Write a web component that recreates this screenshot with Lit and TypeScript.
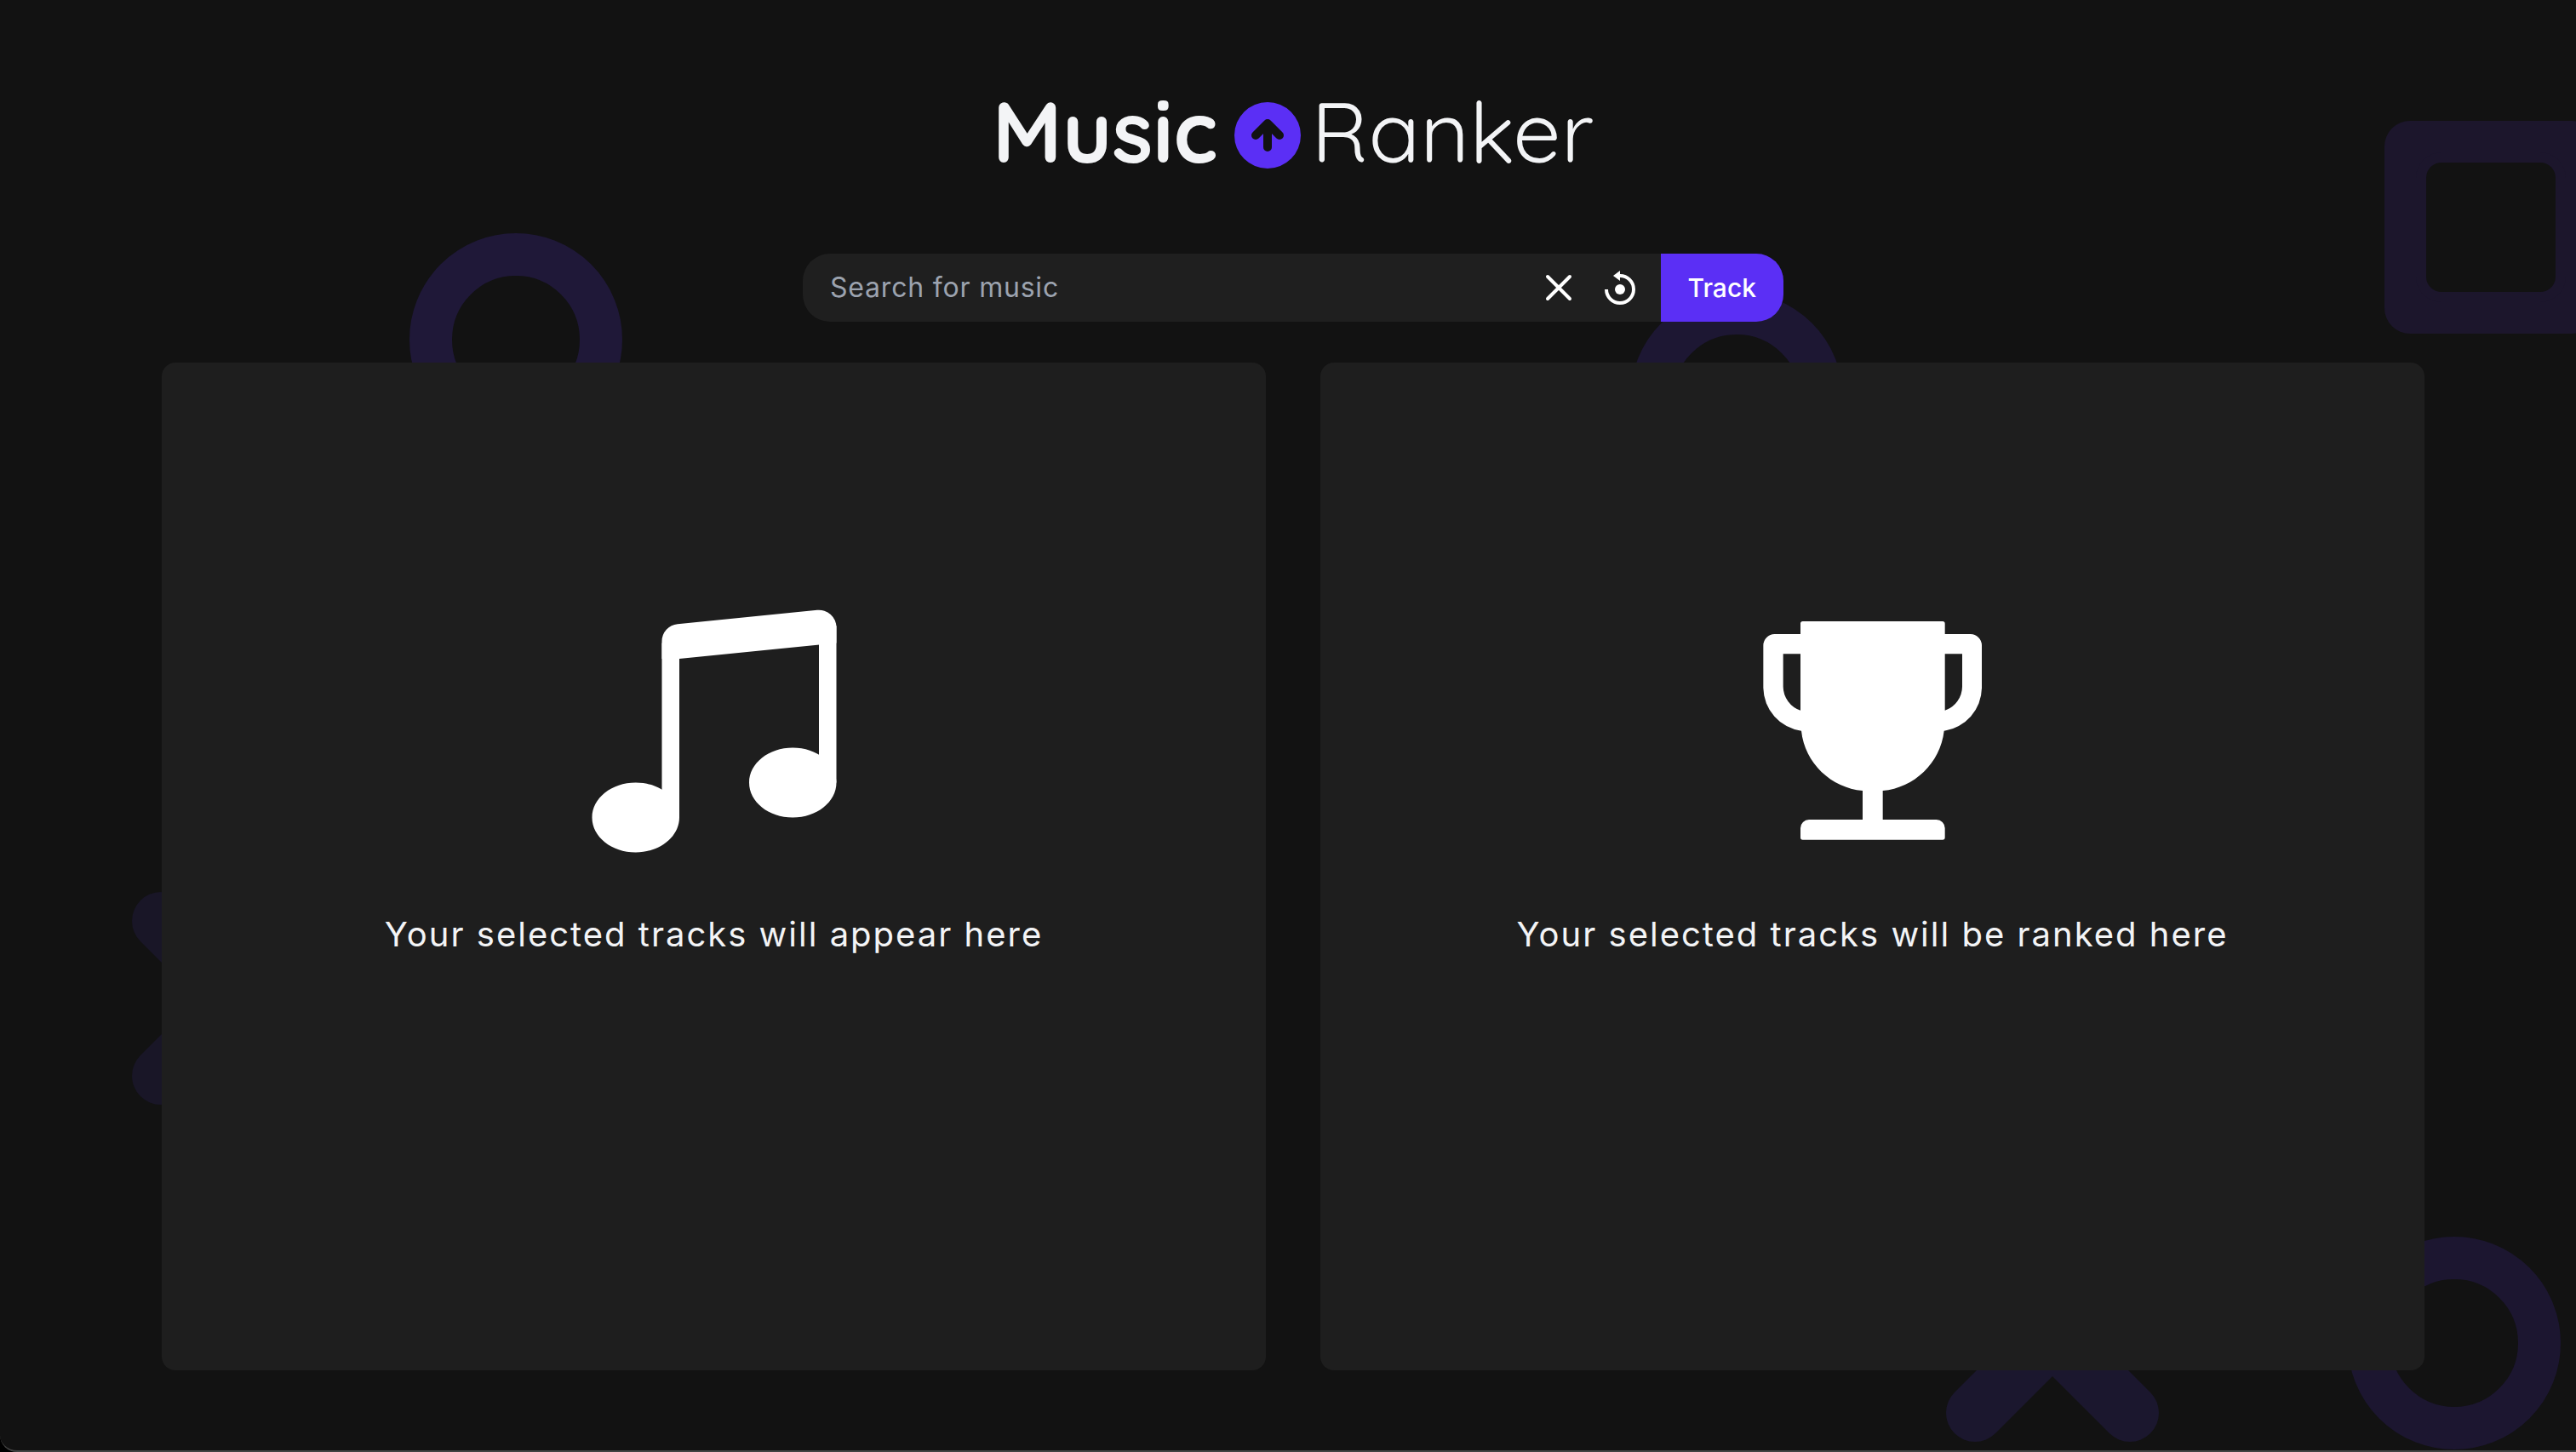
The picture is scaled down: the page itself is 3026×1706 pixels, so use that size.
import { LitElement, html, css, svg } from "lit";
import { customElement, property, state } from "lit/decorators.js";

const noteIcon = svg`
  <svg class="art" viewBox="0 0 16 16" aria-hidden="true">
    <path d="M6 13c0 1.105-1.12 2-2.5 2S1 14.105 1 13s1.12-2 2.5-2 2.5.895 2.5 2zM15 11c0 1.105-1.12 2-2.5 2s-2.5-.895-2.5-2 1.12-2 2.5-2 2.5.895 2.5 2z" />
    <path d="M14 11V2h1v9zM6 3v10H5V3z" />
    <path d="M5 2.905a1 1 0 0 1 .9-.995l8-.8a1 1 0 0 1 1.1.995V3L6 3.9H5z" />
  </svg>`;

const trophyIcon = svg`
  <svg class="art" viewBox="-12 -18 984 984" aria-hidden="true">
    <path fill-rule="evenodd" d="M225 98q0-8 8-8H726q8 0 8 8V135H824a40 40 0 0 1 40 40V325A155 155 0 0 1 731 476C718 590 625 677 515 687V789H704a30 30 0 0 1 30 30V852q0 8-8 8H233q-8 0-8-8V819a30 30 0 0 1 30-30H444V687C334 677 240 590 228 476A155 155 0 0 1 94 325V175a40 40 0 0 1 40-40H225ZM164 205V320A90 90 0 0 0 225 404V205ZM734 205V404A90 90 0 0 0 795 320V205Z" />
  </svg>`;

@customElement("ranker-logo")
export class RankerLogo extends LitElement {
  static styles = css`
    :host { display: block; }
    .title {
      margin: 0;
      display: flex;
      align-items: center;
      gap: 12px;
      color: #f3f4f6;
      font: 400 100px/124px Quicksand, Lato, sans-serif;
    }
    .bold { font-weight: 700; padding-right: 8px; }
    .mark { display: block; width: 78px; height: 88px; }
    .disc { fill: #5b2ff5; }
    .arrow { fill: none; stroke: #121212; stroke-width: 10px; stroke-linecap: round; stroke-linejoin: round; }
  `;

  render() {
    return html`
      <h1 class="title">
        <span class="bold">Music</span>
        <svg class="mark" viewBox="0 0 78 88" aria-hidden="true">
          <circle class="disc" cx="39" cy="49" r="39" />
          <path class="arrow" d="M39 36V63M25 49L39 35L53 49" />
        </svg>
        <span>Ranker</span>
      </h1>`;
  }
}

@customElement("search-bar")
export class SearchBar extends LitElement {
  @state() private query = "";

  static styles = css`
    :host { display: block; }
    .bar {
      display: flex;
      align-items: stretch;
      width: 1152px;
      max-width: 100%;
      height: 80px;
      border-radius: 32px;
      overflow: hidden;
      background: #1f1f1f;
    }
    .field {
      flex: 1;
      min-width: 0;
      border: 0;
      outline: 0;
      padding: 0 32px;
      background: transparent;
      color: #f3f4f6;
      font: 400 32px/48px Inter, sans-serif;
      letter-spacing: 0.025em;
    }
    .field::placeholder { color: #9ca3af; opacity: 1; }
    .actions { display: flex; align-items: center; gap: 24px; padding-right: 24px; }
    .icon-button { display: flex; padding: 0; border: 0; background: none; cursor: pointer; }
    .icon { display: block; width: 48px; height: 48px; fill: none; stroke: #fff; stroke-width: 4px; }
    .round { stroke-linecap: round; }
    .solid { fill: #fff; stroke: none; }
    .submit {
      border: 0;
      padding: 0 32px;
      background: #5b2ff5;
      color: #fff;
      font: 500 30px/48px Inter, sans-serif;
      cursor: pointer;
    }
  `;

  private onInput(e: Event) {
    this.query = (e.target as HTMLInputElement).value;
  }

  render() {
    return html`
      <form class="bar" role="search" @submit=${(e: Event) => e.preventDefault()}>
        <input class="field" type="text" aria-label="Search for music" placeholder="Search for music"
          .value=${this.query} @input=${this.onInput} />
        <div class="actions">
          <button class="icon-button" type="button" aria-label="Clear" @click=${() => (this.query = "")}>
            <svg class="icon" viewBox="0 0 48 48"><path class="round" d="M11 11L37 37M37 11L11 37" /></svg>
          </button>
          <button class="icon-button" type="button" aria-label="Reset">
            <svg class="icon" viewBox="0 0 48 48">
              <path d="M8 26A16 16 0 1 0 24 10" />
              <path class="solid" d="M16 10L24 4V16Z" />
              <circle class="solid" cx="24" cy="26" r="6" />
            </svg>
          </button>
        </div>
        <button class="submit" type="submit">Track</button>
      </form>`;
  }
}

@customElement("empty-panel")
export class EmptyPanel extends LitElement {
  @property() message = "";
  @property() icon: "note" | "trophy" = "note";

  static styles = css`
    :host { display: block; }
    .panel {
      box-sizing: border-box;
      height: 100%;
      padding: 268px 32px 64px;
      display: flex;
      flex-direction: column;
      align-items: center;
      gap: 48px;
      border-radius: 16px;
      background: #1e1e1e;
    }
    .art { display: block; width: 328px; height: 328px; fill: #fff; }
    .message {
      margin: 0;
      color: #f3f4f6;
      font: 400 40px/56px Inter, sans-serif;
      letter-spacing: 0.05em;
      text-align: center;
    }
  `;

  render() {
    return html`
      <section class="panel">
        ${this.icon === "note" ? noteIcon : trophyIcon}
        <p class="message">${this.message}</p>
      </section>`;
  }
}

@customElement("app-root")
export class AppRoot extends LitElement {
  static styles = css`
    :host { display: block; background: #000; }
    .page {
      position: relative;
      box-sizing: border-box;
      min-height: 100vh;
      padding: 92px 178px 94px 190px;
      display: flex;
      flex-direction: column;
      align-items: center;
      overflow: hidden;
      background: #121212;
      border-bottom: 2px solid #444;
      border-bottom-left-radius: 20px;
    }
    .logo, .search, .panels { position: relative; }
    .search { margin-top: 82px; max-width: 100%; }
    .panels {
      flex: 1;
      align-self: stretch;
      margin-top: 48px;
      display: grid;
      grid-template-columns: 1fr 1fr;
      gap: 64px;
    }
    .shape { position: absolute; box-sizing: border-box; width: 250px; height: 250px; }
    .ring { border: 50px solid; border-radius: 50%; }
    .square { border: 49px solid #1c162c; border-radius: 30px; }
    .hole { width: 152px; height: 152px; box-shadow: 0 0 0 12px #1c162c; border-radius: 18px; }
    .cross { fill: none; stroke-width: 68px; stroke-linecap: round; }
    .ring-a { left: 481px; top: 274px; border-color: #1f1838; }
    .ring-b { left: 1915px; top: 343px; border-color: #1d1733; }
    .ring-c { right: 18px; bottom: 1px; border-color: #1c1630; }
    .square-a { right: -25px; top: 142px; }
    .cross-a { left: 155px; top: 1048px; stroke: #191627; }
    .cross-b { right: 490px; bottom: 10px; stroke: #1b172e; }
  `;

  render() {
    return html`
      <main class="page">
        <div class="shape ring ring-a"></div>
        <div class="shape ring ring-b"></div>
        <div class="shape ring ring-c"></div>
        <div class="shape square square-a"><div class="hole"></div></div>
        <svg class="shape cross cross-a" viewBox="0 0 250 250" aria-hidden="true"><path d="M34 34L216 216M216 34L34 216" /></svg>
        <svg class="shape cross cross-b" viewBox="0 0 250 250" aria-hidden="true"><path d="M34 34L216 216M216 34L34 216" /></svg>
        <ranker-logo class="logo"></ranker-logo>
        <search-bar class="search"></search-bar>
        <div class="panels">
          <empty-panel icon="note" message="Your selected tracks will appear here"></empty-panel>
          <empty-panel icon="trophy" message="Your selected tracks will be ranked here"></empty-panel>
        </div>
      </main>`;
  }
}
